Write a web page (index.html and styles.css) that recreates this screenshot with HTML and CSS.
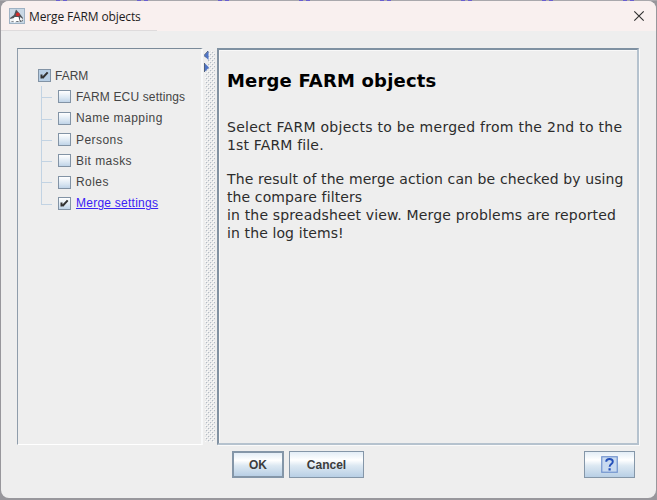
FILE: index.html
```html
<!DOCTYPE html>
<html lang="en">
<head>
<meta charset="utf-8">
<title>Merge FARM objects</title>
<link rel="stylesheet" href="styles.css">
</head>
<body>
<main class="dialog">
  <header class="titlebar">
    <svg class="app-icon" width="16" height="16" viewBox="0 0 16 16">
      <rect width="16" height="16" fill="#9fb2c4"/>
      <rect x="1" y="1" width="14" height="14" fill="#c9d8e5"/>
      <path d="M1 10l4-3 2-5.5L11 6l3 4v3l-3 1H2z" fill="#50545a"/>
      <path d="M5.5 9h4l1.5 5-3-1-3 2-1-3z" fill="#fff"/>
      <path d="M1 11l4-1v3l-4 1zM11 9l3 2-1 2-2-1z" fill="#f0f3f5"/>
      <circle cx="8.8" cy="6.4" r="1.9" fill="#d52b2b"/>
    </svg>
    <span class="title">Merge FARM objects</span>
    <svg class="close" width="12" height="12" viewBox="0 0 12 12"><path d="M1.3 1.3l9.4 9.4M10.7 1.3l-9.4 9.4" stroke="#303030" stroke-width="1.15"/></svg>
  </header>
  <div class="split">
    <section class="tree">
      <div class="row root"><span class="box filled"><svg width="13" height="13" viewBox="0 0 13 13"><path d="M3.5 5.5v4M4.5 9L9.7 3.4" fill="none" stroke="#333" stroke-width="2"/></svg></span><span class="label">FARM</span></div>
      <div class="children">
        <div class="row"><span class="box"></span><span class="label ecu">FARM ECU settings</span></div>
        <div class="row"><span class="box"></span><span class="label wide">Name mapping</span></div>
        <div class="row"><span class="box"></span><span class="label wide">Persons</span></div>
        <div class="row"><span class="box"></span><span class="label wide">Bit masks</span></div>
        <div class="row"><span class="box"></span><span class="label wide">Roles</span></div>
        <div class="row last"><span class="box"><svg width="13" height="13" viewBox="0 0 13 13"><path d="M3.5 5.5v4M4.5 9L9.7 3.4" fill="none" stroke="#333" stroke-width="2"/></svg></span><a class="label link">Merge settings</a></div>
      </div>
    </section>
    <div class="divider">
      <svg width="11" height="396" viewBox="0 0 11 396">
        <defs><pattern id="bumps" width="4" height="4" patternUnits="userSpaceOnUse"><rect width="1.2" height="1.2" fill="#b3bbc4"/><rect x="2" y="2" width="1.2" height="1.2" fill="#b3bbc4"/><rect x="1.2" y="1" width="1" height="1" fill="#fff"/><rect x="3.2" y="3" width=".8" height="1" fill="#fff"/></pattern></defs>
        <rect x="1" y="3" width="10" height="391" fill="url(#bumps)"/>
        <path d="M0 2h4v17H0z" fill="#eee"/>
        <path d="M4.5 3v9L0 7.5z" fill="#4f74c6"/><path d="M4 3L0 7.5 2 9.5" fill="none" stroke="#53627d"/>
        <path d="M.5 15v9L5 19.5z" fill="#4f74c6"/><path d="M.5 15v9" stroke="#53627d"/>
      </svg>
    </div>
    <section class="info">
      <h1>Merge FARM objects</h1>
      <p><span class="l1">Select FARM objects to be merged from the 2nd to the</span><br><span class="l5">1st FARM file.</span></p>
      <p><span class="l3">The result of the merge action can be checked by using</span><br><span class="l3">the compare filters</span><br><span class="l5">in the spreadsheet view. Merge problems are reported</span><br><span class="l3">in the log items!</span></p>
    </section>
  </div>
  <footer class="actions">
    <button class="ok">OK</button>
    <button class="cancel">Cancel</button>
    <button class="help" aria-label="Help"><svg width="17" height="17" viewBox="0 0 17 17"><rect x=".75" y=".75" width="15.5" height="15.5" fill="#c8daf0" stroke="#7193ce" stroke-width="1.2"/><path d="M5.2 5.7C5.2 2 11.8 2 11.8 5.7c0 2.2-3.2 2.5-3.2 5.1" fill="none" stroke="#2450ba" stroke-width="1.9"/><path d="M7.5 12.2h2.2v2.2H7.5z" fill="#2450ba"/></svg></button>
  </footer>
</main>
</body>
</html>
```

FILE: styles.css
```css
* { box-sizing: border-box; }
body {
  margin: 0;
  width: 657px;
  height: 500px;
  overflow: hidden;
  padding: 1px 1px 2px;
  background:
    repeating-linear-gradient(90deg, transparent 0 56px, #6a5fd0 56px 60px, transparent 60px 63px, #6a5fd0 63px 67px, transparent 67px 81px) 0 0 / 100% 1px no-repeat,
    linear-gradient(90deg, #a9a8ac, #a9a8ac) 0 0 / 100% 1px no-repeat,
    #98979c;
  font-family: "Liberation Sans", Arial, sans-serif;
}
.dialog {
  height: 497px;
  background: #eee;
  border-radius: 8px;
  overflow: hidden;
}
.titlebar {
  display: flex;
  align-items: center;
  height: 30px;
  padding: 0 11px 0 8px;
  background: linear-gradient(#dedbdc, #dedbdc) 0 100% / 156px 1px no-repeat, #f9f0ef;
}
.title {
  margin-left: 4px;
  flex: 1;
  font: 12px "Open Sans", sans-serif;
  letter-spacing: -.13px;
  color: #1c1c1c;
}
.split { display: flex; padding: 17px 17px 0 16px; height: 414px; }
.tree {
  width: 186px;
  height: 397px;
  padding-top: 16px;
  padding-left: 20px;
  border-top: 1px solid #7a8a99;
  border-left: 1px solid #8f9dab;
  border-right: 2px solid #f8f9fa;
  border-bottom: 1px solid #fff;
}
.row {
  display: flex;
  align-items: center;
  position: relative;
  height: 21.3px;
  font-size: 12px;
  color: #444;
  white-space: nowrap;
}
.box {
  width: 13px;
  height: 13px;
  margin-right: 5px;
  border: 1px solid #8293a5;
  background: linear-gradient(#fff, #dce8f3 60%, #c0d4e8);
}
.root .box { margin-right: 4px; }
.box.filled { background: #b8cfe5; }
.box svg { display: block; margin: -1px; }
.ecu { letter-spacing: .15px; }
.wide { letter-spacing: .45px; }
.children { padding-left: 20px; }
.children .row::before {
  content: "";
  position: absolute;
  left: -17px;
  top: 0;
  width: 10px;
  height: 11px;
  border-left: 1px solid #c2d3e3;
  border-bottom: 1px solid #c2d3e3;
}
.children .row:not(.last)::after {
  content: "";
  position: absolute;
  left: -17px;
  top: 10px;
  height: 12px;
  border-left: 1px solid #c2d3e3;
}
.link { color: #3a22f5; text-decoration: underline; letter-spacing: .25px; }
.divider { width: 11px; margin-left: 1px; height: 397px; }
.divider svg { display: block; }
.info {
  margin-left: 2px;
  width: 422px;
  height: 397px;
  padding: 18px 0 0 8px;
  border: 2px solid;
  border-color: #7f91a2 #b5c2ce #b5c2ce #8191a1;
  box-shadow: 1px 1px #fafafa, inset 1px 1px #f8f8f8;
  font-family: "DejaVu Sans", Verdana, sans-serif;
  color: #2c2c2c;
}
h1 { margin: 0; font-size: 18px; line-height: 26px; letter-spacing: .18px; color: #000; }
p { margin: 0; font-size: 14px; line-height: 18px; white-space: nowrap; }
h1 + p { margin: 24px 0 16px; }
.l1 { letter-spacing: .27px; }
.l3 { letter-spacing: .11px; }
.l5 { letter-spacing: .16px; }
.actions { display: flex; padding: 6px 21px 0 231px; }
button {
  height: 27px;
  padding: 0;
  border: 1px solid #8496a8;
  background: linear-gradient(#e3edf6, #fff 32%, #dce8f2 55%, #b8cfe5);
  font: bold 12px "Liberation Sans", Arial, sans-serif;
  color: #3c3c3c;
}
.ok { width: 52px; border-width: 2px; }
.cancel { width: 75px; margin-left: 5px; }
.help { width: 51px; margin-left: auto; display: grid; place-items: center; }
```
